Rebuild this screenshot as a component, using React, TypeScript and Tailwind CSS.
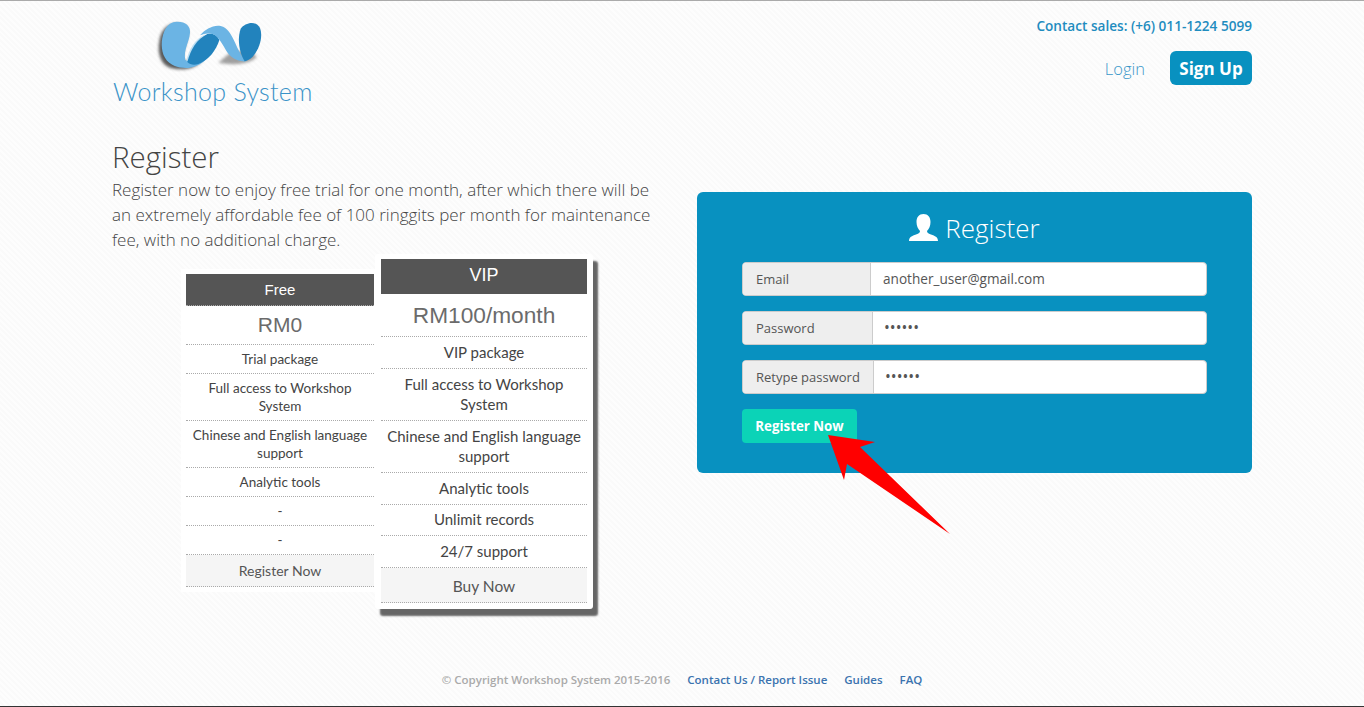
const freeRows = [
  { text: 'Trial package', h: 'h-[29px]' },
  { text: 'Full access to Workshop System', h: 'h-[47px]' },
  { text: 'Chinese and English language support', h: 'h-[47px]' },
  { text: 'Analytic tools', h: 'h-[29px]' },
  { text: '-', h: 'h-[29px]' },
  { text: '-', h: 'h-[29px]' },
];

const vipRows = [
  { text: 'VIP package', h: 'h-[32px]' },
  { text: 'Full access to Workshop System', h: 'h-[52px]' },
  { text: 'Chinese and English language support', h: 'h-[52px]' },
  { text: 'Analytic tools', h: 'h-[32px]' },
  { text: 'Unlimit records', h: 'h-[31px]' },
  { text: '24/7 support', h: 'h-[32px]' },
];

const fields = [
  { label: 'Email', value: 'another_user@gmail.com', addon: 'w-[128px]', input: 'text-[13.6px] pl-[12px]' },
  { label: 'Password', value: '••••••', addon: 'w-[130px]', input: 'text-[15.5px] pl-[11px]' },
  { label: 'Retype password', value: '••••••', addon: 'w-[131px]', input: 'text-[15.5px] pl-[11px]' },
];

function Logo() {
  return (
    <svg viewBox="0 0 360 186" className="w-[120px] h-[62px] ml-[38px] block">
      <defs>
        <filter id="logoShadow" x="-20%" y="-20%" width="140%" height="140%">
          <feGaussianBlur stdDeviation="5" />
        </filter>
      </defs>
      {/* soft drop shadow */}
      <path d="M70 24 C100 20 116 34 114 52 C112 80 94 104 100 136 L160 128 C140 158 100 166 62 156 C30 146 22 110 28 76 C32 48 46 28 70 24 Z" fill="#333" opacity="0.8" filter="url(#logoShadow)" />
      <path d="M205 140 C240 146 290 150 320 124 L300 100 L240 110 Z" fill="#555" opacity="0.55" filter="url(#logoShadow)" />
      {/* left lobe and lower ribbon */}
      <path d="M75 18 C105 15 122 30 120 50 C118 78 100 100 106 132 C112 140 150 120 205 70 C190 115 160 150 120 155 C95 158 60 152 45 125 C32 105 33 70 42 48 C50 30 60 20 75 18 Z" fill="#6bb4e4" />
      {/* highlight edge of the middle fold */}
      <path d="M109 136 C116 100 135 68 168 54 C140 72 124 102 115 134 Z" fill="#bfe0f4" />
      {/* dark middle fold */}
      <path d="M112 138 C122 100 140 70 172 54 C190 50 202 58 208 72 C198 105 175 132 145 144 C132 148 120 146 112 138 Z" fill="#2283bd" />
      {/* upper ribbon */}
      <path d="M150 58 C165 40 190 26 212 30 C232 34 244 55 256 82 C264 100 272 118 288 136 C262 138 240 125 226 100 C214 78 204 62 190 55 C178 50 162 52 150 58 Z" fill="#6bb4e4" />
      {/* right dark lobe */}
      <path d="M272 38 C285 20 318 12 330 36 C340 62 328 100 308 122 C300 130 292 134 284 136 C270 115 260 72 272 38 Z" fill="#2283bd" />
    </svg>
  );
}

function UserGlyph() {
  return (
    <svg viewBox="0 0 29 27" className="w-[29px] h-[27px] mr-[7px]" fill="white">
      <path d="M14.5 0 C19 0 21.5 3 21.5 8 C21.5 12 20 15 18 17 C18 18.5 19 19.5 22 20.5 C26 22 29 23 29 27 L0 27 C0 23 3 22 7 20.5 C10 19.5 11 18.5 11 17 C9 15 7.5 12 7.5 8 C7.5 3 10 0 14.5 0 Z" />
    </svg>
  );
}

export default function App() {
  return (
    <div className="relative h-[707px] overflow-hidden border-t border-b border-t-[#aaaaaa] border-b-[#333333] bg-[#fcfcfc] bg-[repeating-linear-gradient(45deg,#fdfdfd_0px,#fdfdfd_2px,#fafafa_2px,#fafafa_4px)] font-['Open_Sans',sans-serif] text-[#555]">
      <div className="w-[1140px] h-[670px] ml-[112px]">
        {/* Header */}
        <div className="flex justify-between h-[132px]">
          <div className="pt-[15px]">
            <Logo />
            <div className="font-['Lato',sans-serif] font-light text-[25px] leading-[32px] tracking-[0.3px] text-[#3a93c8] mt-[-3px] ml-[1px]">
              Workshop System
            </div>
          </div>
          <div className="flex flex-col items-end pt-[16px]">
            <div className="text-[13.6px] leading-[18px] font-semibold text-[#1f8cbf]">Contact sales: (+6) 011-1224 5099</div>
            <div className="flex items-center mt-[16px]">
              <a className="text-[16.5px] font-light text-[#3a97c9] mr-[25px] pt-[2px]">Login</a>
              <a className="w-[82px] h-[34px] rounded-[6px] bg-[#0891c0] text-white font-bold text-[17px] flex items-center justify-center pt-[2px]">Sign Up</a>
            </div>
          </div>
        </div>

        <div className="flex justify-between">
          {/* Left column */}
          <div className="w-[540px]">
            <h1 className="text-[29.5px] font-light leading-[40px] text-[#444] mt-[4px]">Register</h1>
            <p className="text-[17px] font-light leading-[25px] text-[#444]">
              Register now to enjoy free trial for one month, after which there will be an extremely affordable fee of 100 ringgits per month for maintenance fee, with no additional charge.
            </p>
            <div className="flex items-start ml-[69px] mt-[2px] font-['Lato',sans-serif]">
              {/* Free */}
              <div className="mt-[15px] w-[194px] bg-white pl-[5px] pr-[1px] pt-[5px] pb-[5px]">
                <div className="h-[32px] bg-[#555] text-white text-[15px] font-['Liberation_Sans',sans-serif] flex items-center justify-center pt-[1px] border-b border-dotted border-[#aaa]">Free</div>
                <div className="h-[39px] flex items-center justify-center text-[21px] text-[#6b6b6b] font-['Liberation_Sans',sans-serif] border-b border-dotted border-[#aaa]">RM0</div>
                {freeRows.map((r, i) => (
                  <div key={i} className={`${r.h} flex items-center justify-center text-center text-[13.5px] leading-[18px] px-[4px] text-[#444] border-b border-dotted border-[#aaa]`}>
                    {r.text}
                  </div>
                ))}
                <div className="h-[32px] bg-[#f5f5f5] flex items-center justify-center text-[14px] text-[#555] border-b border-dotted border-[#aaa]">Register Now</div>
              </div>
              {/* VIP */}
              <div className="relative z-10 w-[218px] bg-white p-[6px] pt-[5px] rounded-[3px] shadow-[5px_7px_2px_#666]">
                <div className="h-[35px] bg-[#555] text-white text-[18px] font-['Liberation_Sans',sans-serif] flex items-center justify-center pb-[3px]">VIP</div>
                <div className="h-[43px] flex items-center justify-center text-[22.7px] text-[#6b6b6b] font-['Liberation_Sans',sans-serif] border-b border-dotted border-[#aaa]">RM100/month</div>
                {vipRows.map((r, i) => (
                  <div key={i} className={`${r.h} flex items-center justify-center text-center text-[15px] leading-[20px] px-[2px] pb-[2px] text-[#444] border-b border-dotted border-[#aaa]`}>
                    <span className="max-w-[196px]">{r.text}</span>
                  </div>
                ))}
                <div className="h-[35px] bg-[#f5f5f5] flex items-center justify-center text-[15.5px] text-[#555] pt-[3px] border-b border-dotted border-[#aaa]">Buy Now</div>
              </div>
            </div>
          </div>

          {/* Register form */}
          <div className="w-[555px] h-[281px] mt-[59px] rounded-[6px] bg-[#0891c0] px-[45px]">
            <div className="h-[70px] flex items-center justify-center text-white">
              <UserGlyph />
              <span className="text-[26px] font-light leading-[36px] pt-[1px]">Register</span>
            </div>
            <div className="flex flex-col gap-[15px]">
              {fields.map((f) => (
                <div key={f.label} className="flex h-[34px] rounded-[4px] overflow-hidden border border-[#ccc] bg-white">
                  <div className={`${f.addon} bg-[#eeeeee] border-r border-[#ccc] flex items-center pl-[13px] pt-[1px] text-[13px] text-[#555] shrink-0`}>{f.label}</div>
                  <div className={`flex-1 flex items-center text-[#555] ${f.input}`}>{f.value}</div>
                </div>
              ))}
            </div>
            <button className="mt-[15px] w-[115px] h-[34px] rounded-[4px] bg-[#0bd3b7] text-white font-bold text-[13.3px] pt-[1px]">Register Now</button>
          </div>
        </div>
      </div>

      {/* Footer */}
      <div className="flex justify-center gap-[17px] text-[11.5px] font-semibold leading-[18px]">
        <span className="text-[#aaa]">© Copyright Workshop System 2015-2016</span>
        <a className="text-[#3b73af]">Contact Us / Report Issue</a>
        <a className="text-[#3b73af]">Guides</a>
        <a className="text-[#3b73af]">FAQ</a>
      </div>

      {/* Red arrow annotation */}
      <svg className="absolute left-0 top-[-1px] pointer-events-none" width="1364" height="707">
        <polygon points="828,435 875,442 860,447 950,534 847,464 844,480" fill="#ff0000" />
      </svg>
    </div>
  );
}
